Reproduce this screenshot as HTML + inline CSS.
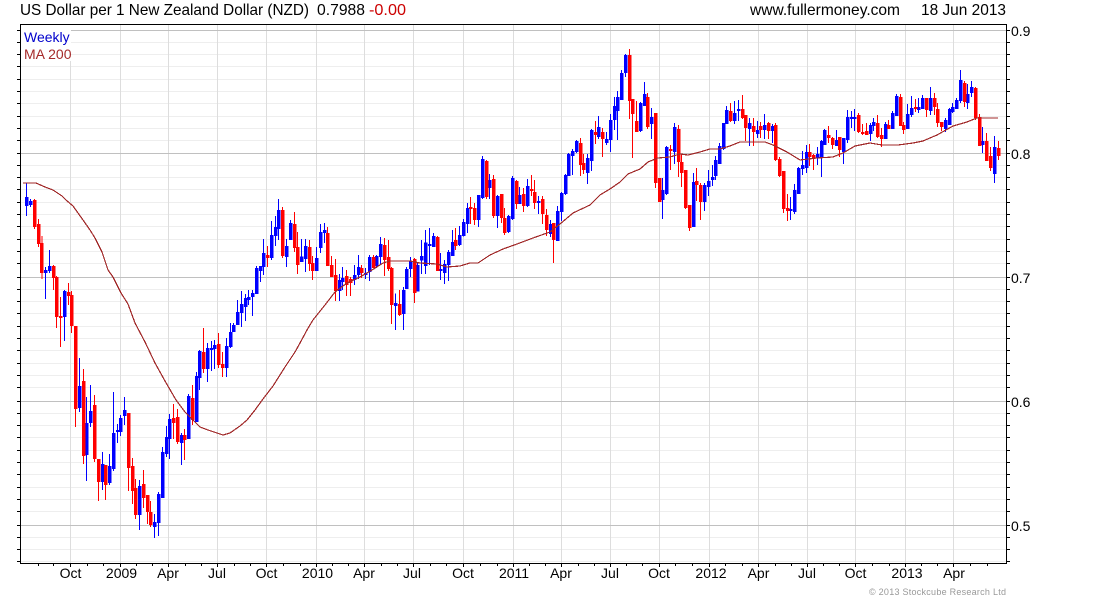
<!DOCTYPE html>
<html>
<head>
<meta charset="utf-8">
<title>US Dollar per 1 New Zealand Dollar</title>
<style>
html,body{margin:0;padding:0;background:#fff;width:1100px;height:600px;overflow:hidden}
svg{display:block;position:absolute;left:0;top:0}
text{font-family:"Liberation Sans",Arial,sans-serif}
.bl{stroke:#0000ff}
.rd{stroke:#ff0000}
</style>
</head>
<body>
<svg width="1100" height="600" viewBox="0 0 1100 600" xmlns="http://www.w3.org/2000/svg">
<g shape-rendering="crispEdges" fill="none" stroke-width="1">
<path stroke="#eeeeee" d="M21 42.5H1006M21 54.5H1006M21 66.5H1006M21 79.5H1006M21 91.5H1006M21 103.5H1006M21 116.5H1006M21 128.5H1006M21 140.5H1006M21 165.5H1006M21 177.5H1006M21 189.5H1006M21 202.5H1006M21 214.5H1006M21 226.5H1006M21 239.5H1006M21 251.5H1006M21 263.5H1006M21 289.5H1006M21 301.5H1006M21 313.5H1006M21 326.5H1006M21 338.5H1006M21 350.5H1006M21 363.5H1006M21 375.5H1006M21 387.5H1006M21 413.5H1006M21 425.5H1006M21 437.5H1006M21 450.5H1006M21 462.5H1006M21 474.5H1006M21 487.5H1006M21 499.5H1006M21 511.5H1006M21 537.5H1006M21 549.5H1006M21 561.5H1006"/>
<path stroke="#dddddd" d="M70.5 25V563M120.5 25V563M168.5 25V563M217.5 25V563M266.5 25V563M316.5 25V563M364.5 25V563M413.5 25V563M463.5 25V563M513.5 25V563M561.5 25V563M610.5 25V563M659.5 25V563M709.5 25V563M758.5 25V563M807.5 25V563M855.5 25V563M905.5 25V563M953.5 25V563"/>
<path stroke="#c0c0c0" d="M21 30.5H1006M21 153.5H1006M21 277.5H1006M21 401.5H1006M21 525.5H1006"/>
</g>
<rect x="21" y="25" width="50" height="36" fill="#fff"/>
<g shape-rendering="crispEdges" fill="none">
<g transform="translate(.17 0) scale(.33333 1)">
<path class="bl" stroke-width="3" d="M79 183V216M91 199V207M136 267V299M148 250V273M193 290V341M238 358V412M259 397V481M271 385V427M307 452V490M328 454V485M340 392V471M352 424V443M361 415V436M373 397V425M418 480V530M463 514V538M475 492V536M487 447V498M499 426V457M508 414V459M544 433V465M565 394V439M589 372V422M598 350V390M622 343V382M634 341V371M643 340V369M679 338V377M691 323V348M700 323V332M712 300V325M724 291V327M736 294V321M745 290V305M757 290V316M769 266V294M781 266V282M790 239V275M814 221V260M826 216V246M835 199V240M859 239V267M871 220V240"/>
<path class="bl" stroke-width="10.5" d="M79 197V206M91 201V205M136 270V273M148 266V271M193 291V317M238 386V408M259 423V455M271 411V423M307 464V482M328 466V483M340 433V469M352 430V432M361 418V432M373 410V416M418 486V515M463 522V527M475 494V523M487 452V498M499 437V454M508 419V439M544 435V443M565 396V439M589 376V422M598 351V378M622 348V369M634 348V350M643 345V349M679 346V368M691 332V347M700 325V332M712 312V325M724 304V313M736 298V307M745 297V300M757 293V297M769 268V294M781 266V271M790 253V267M814 235V258M826 227V236M835 210V229M859 246V257M871 223V240"/>
<path class="rd" stroke-width="3" d="M103 199V229M115 219V247M125 236V279M160 265V290M169 276V328M181 297V347M205 283V305M214 291V333M226 326V427M250 369V464M283 395V462M295 459V501M316 465V500M385 413V491M397 458V504M406 479V519M430 470V508M442 495V524M451 501V527M520 404V439M532 409V444M553 429V460M577 385V425M610 328V373M655 333V368M667 352V377M802 246V267M847 207V258M883 212V252M892 232V274"/>
<path class="rd" stroke-width="10.5" d="M103 200V227M115 224V244M125 243V273M160 266V278M169 277V317M181 316V318M205 292V296M214 295V326M226 326V409M250 381V456M283 405V459M295 459V482M316 465V485M385 413V468M397 466V491M406 488V515M430 484V498M442 495V512M451 512V525M520 418V423M532 417V442M553 435V440M577 398V420M610 352V369M655 344V365M667 364V368M802 255V258M847 210V256M883 224V248M892 247V265"/>
</g>
<g transform="translate(300.17 130) scale(.33333)">
<path class="bl" stroke-width="3" d="M4 327V396M16 327V426M49 351V423M61 282V369M73 279V339M118 432V513M127 411V480M163 405V465M175 375V447M196 414V447M208 375V453M229 375V414M241 321V405M286 490V600M310 471V600M319 411V477M331 381V441M352 396V485M364 330V432M376 300V432M388 294V405M400 309V351M421 369V450M433 390V462M445 360V453M457 300V378M478 288V348M490 267V320M502 219V309M535 195V291M547 78V207M568 132V207M592 195V294M625 255V309M637 138V270M658 171V222M682 147V231M715 198V252M751 270V321M772 228V333M784 186V273M796 132V195M805 69V138M817 57V135M829 30V69"/>
<path class="bl" stroke-width="10.5" d="M4 380V396M16 348V387M49 384V423M61 306V354M73 300V309M118 450V483M127 444V456M163 435V450M175 411V435M196 429V435M208 381V426M229 378V408M241 342V381M286 519V528M310 480V552M319 417V477M331 393V417M352 405V485M364 378V392M376 338V408M388 342V348M400 318V351M421 417V423M433 402V429M445 366V405M457 336V378M478 315V345M490 276V318M502 234V282M535 195V270M547 87V204M568 150V174M592 198V258M625 258V306M637 144V267M658 195V222M682 168V228M715 213V219M751 282V312M772 243V333M784 189V246M796 135V192M805 72V138M817 63V78M829 33V66"/>
<path class="rd" stroke-width="3" d="M28 330V423M37 378V450M82 291V408M94 378V441M106 387V513M139 420V498M151 441V498M184 405V444M220 375V414M253 324V438M265 330V423M274 411V582M298 480V558M343 384V519M412 318V423M466 294V360M511 201V282M523 219V285M559 90V207M580 135V264M604 192V279M613 234V315M649 150V237M670 174V246M694 135V198M703 150V237M727 198V282M739 237V318M760 279V399"/>
<path class="rd" stroke-width="10.5" d="M28 351V402M37 399V423M82 309V408M94 405V441M106 435V483M139 438V465M151 447V459M184 414V429M220 381V414M253 345V390M265 381V417M274 414V525M298 522V555M343 387V489M412 321V423M466 330V348M511 231V237M523 234V270M559 93V201M580 147V258M604 192V264M613 264V309M649 153V222M670 192V228M694 177V183M703 186V219M727 207V252M739 255V300M760 279V330"/>
</g>
<g transform="translate(560.17 0) scale(.33333 1)">
<path class="bl" stroke-width="3" d="M82 154V184M94 129V171M115 116V139M139 132V145M151 114V152M163 97V130M172 91V140M184 70V100M196 54V77M241 102V132M253 82V106M274 108V139M307 178V219M319 146V195M343 123V164M400 173V227M433 183V211M445 170V196M457 165V186M466 156V180M478 143V164M490 123V150M499 106V124M523 101V124M535 100V121M568 118V146M592 121V138M613 114V139M637 124V143M691 197V220M703 184V214M715 167V194M727 151V175M739 145V173M772 147V165M784 140V177M793 129V145"/>
<path class="bl" stroke-width="10.5" d="M82 158V173M94 130V161M115 127V137M139 139V143M151 120V140M163 106V120M172 97V111M184 73V100M196 55V73M241 103V131M253 94V106M274 117V124M307 190V200M319 147V194M343 127V152M400 182V227M433 185V202M445 181V187M457 177V180M466 160V176M478 146V164M490 123V149M499 110V124M523 113V121M535 109V111M568 123V129M592 130V134M613 125V130M637 126V131M691 209V211M703 190V212M715 168V194M727 165V169M739 152V168M772 154V158M784 141V157M793 130V145"/>
<path class="rd" stroke-width="3" d="M61 138V176M70 154V174M106 121V144M127 128V157M208 49V119M217 99V158M229 101V132M262 93V129M286 113V188M298 178V202M331 145V170M355 125V177M364 155V187M376 170V209M388 205V231M409 168V201M421 183V220M511 103V122M547 95V119M556 115V141M580 118V146M601 122V138M625 122V139M646 123V161M658 157V177M670 171V213M682 194V221M748 144V166M760 154V170"/>
<path class="rd" stroke-width="10.5" d="M61 143V165M70 163V170M106 132V135M127 132V139M208 55V101M217 99V114M229 121V132M262 97V127M286 113V183M298 178V202M331 149V151M355 129V162M364 162V173M376 170V208M388 205V228M409 181V185M421 185V202M511 111V121M547 109V118M556 115V128M580 126V132M601 126V130M625 123V131M646 125V160M658 159V176M670 171V209M682 208V211M748 152V157M760 155V159"/>
</g>
<g transform="translate(820.17 0) scale(.33333 1)">
<path class="bl" stroke-width="3" d="M49 130V146M70 138V164M82 110V143M94 111V128M103 109V131M151 123V141M160 118V131M196 122V139M217 111V129M229 94V116M262 104V129M274 96V117M295 98V113M307 95V109M331 87V115M376 118V132M388 108V125M397 103V113M409 98V109M421 70V103M442 84V109M454 81V97M487 127V153M523 136V183"/>
<path class="bl" stroke-width="10.5" d="M49 140V146M70 138V152M82 117V140M94 117V119M103 117V119M151 125V134M160 122V126M196 124V139M217 113V129M229 96V116M262 114V129M274 108V115M295 107V110M307 98V109M331 98V111M376 120V129M388 109V125M397 107V112M409 100V109M421 80V101M442 94V103M454 87V93M487 141V145M523 147V174"/>
<path class="rd" stroke-width="3" d="M25 126V143M37 137V149M58 137V157M115 113V133M127 124V135M139 123V135M172 115V138M184 128V147M205 120V129M241 94V126M250 122V134M286 99V112M319 98V117M343 93V115M352 103V127M364 122V131M433 81V107M466 87V120M478 114V146M499 133V161M511 147V171M535 141V160"/>
<path class="rd" stroke-width="10.5" d="M25 135V138M37 138V145M58 137V150M115 115V132M127 132V134M139 131V135M172 123V137M184 135V139M205 125V129M241 97V126M250 125V130M286 107V109M319 98V110M343 98V107M352 109V123M364 122V127M433 83V102M466 88V118M478 117V146M499 141V161M511 156V168M535 148V156"/>
</g>
</g>
<polyline fill="none" stroke="#a02828" stroke-width="1.2" shape-rendering="crispEdges" points="23,183 36,183 45,187 53,190 62,196 66,200 73,206 83,220 90,230 95,238 102,252 108,270 113,277 121,293 128,304 135,323 145,342 155,363 165,381 176,400 185,412 194,421 200,427 208,430 217,433 223,435 230,433 240,426 247,420 255,410 263,399 273,386 285,367 295,352 300,343 307,330 313,320 325,305 335,292 347,283 360,277 372,270 383,263 390,261 410,261 420,263 437,264 447,267 460,266 470,263 478,263 490,255 503,249 517,244 533,238 550,232 560,224 573,213 590,205 600,195 610,189 620,182 628,174 640,169 648,162 658,158 670,157 680,154 688,155 700,152 710,149 720,149 730,146 740,142 765,142 773,145 787,152 800,160 817,158 833,157 843,153 855,146 870,143 882,145 898,145 913,143 923,141 937,135 953,126 967,122 977,118 998,118"/>
<g shape-rendering="crispEdges" fill="none" stroke="#000" stroke-width="1">
<path d="M20.5 24.5H1006.5V563.5H20.5Z"/>
<path d="M17 30.5H20M17 42.5H20M17 54.5H20M17 66.5H20M17 79.5H20M17 91.5H20M17 103.5H20M17 116.5H20M17 128.5H20M17 140.5H20M17 153.5H20M17 165.5H20M17 177.5H20M17 189.5H20M17 202.5H20M17 214.5H20M17 226.5H20M17 239.5H20M17 251.5H20M17 263.5H20M17 277.5H20M17 289.5H20M17 301.5H20M17 313.5H20M17 326.5H20M17 338.5H20M17 350.5H20M17 363.5H20M17 375.5H20M17 387.5H20M17 401.5H20M17 413.5H20M17 425.5H20M17 437.5H20M17 450.5H20M17 462.5H20M17 474.5H20M17 487.5H20M17 499.5H20M17 511.5H20M17 525.5H20M17 537.5H20M17 549.5H20M17 561.5H20"/>
<path d="M1007 30.5H1010M1007 42.5H1010M1007 54.5H1010M1007 66.5H1010M1007 79.5H1010M1007 91.5H1010M1007 103.5H1010M1007 116.5H1010M1007 128.5H1010M1007 140.5H1010M1007 153.5H1010M1007 165.5H1010M1007 177.5H1010M1007 189.5H1010M1007 202.5H1010M1007 214.5H1010M1007 226.5H1010M1007 239.5H1010M1007 251.5H1010M1007 263.5H1010M1007 277.5H1010M1007 289.5H1010M1007 301.5H1010M1007 313.5H1010M1007 326.5H1010M1007 338.5H1010M1007 350.5H1010M1007 363.5H1010M1007 375.5H1010M1007 387.5H1010M1007 401.5H1010M1007 413.5H1010M1007 425.5H1010M1007 437.5H1010M1007 450.5H1010M1007 462.5H1010M1007 474.5H1010M1007 487.5H1010M1007 499.5H1010M1007 511.5H1010M1007 525.5H1010M1007 537.5H1010M1007 549.5H1010M1007 561.5H1010"/>
<path d="M70.5 564V567M120.5 564V567M168.5 564V567M217.5 564V567M266.5 564V567M316.5 564V567M364.5 564V567M413.5 564V567M463.5 564V567M513.5 564V567M561.5 564V567M610.5 564V567M659.5 564V567M709.5 564V567M758.5 564V567M807.5 564V567M855.5 564V567M905.5 564V567M953.5 564V567"/>
<path d="M38.5 564V566M53.5 564V566M87.5 564V566M103.5 564V566M136.5 564V566M152.5 564V566M185.5 564V566M201.5 564V566M234.5 564V566M250.5 564V566M283.5 564V566M300.5 564V566M332.5 564V566M348.5 564V566M381.5 564V566M397.5 564V566M430.5 564V566M446.5 564V566M480.5 564V566M497.5 564V566M529.5 564V566M545.5 564V566M578.5 564V566M594.5 564V566M626.5 564V566M642.5 564V566M675.5 564V566M692.5 564V566M725.5 564V566M742.5 564V566M775.5 564V566M791.5 564V566M823.5 564V566M839.5 564V566M872.5 564V566M889.5 564V566M921.5 564V566M937.5 564V566M970.5 564V566M987.5 564V566"/>
</g>
<text x="20" y="15" font-size="16" textLength="289" lengthAdjust="spacingAndGlyphs" fill="#000">US Dollar per 1 New Zealand Dollar (NZD)</text>
<text x="317" y="15" font-size="16" textLength="48" lengthAdjust="spacingAndGlyphs" fill="#000">0.7988</text>
<text x="369" y="15" font-size="16" textLength="37" lengthAdjust="spacingAndGlyphs" fill="#cc0000">-0.00</text>
<text x="750" y="15" font-size="16" textLength="150" lengthAdjust="spacingAndGlyphs" fill="#000">www.fullermoney.com</text>
<text x="921" y="15" font-size="16" textLength="85" lengthAdjust="spacingAndGlyphs" fill="#000">18 Jun 2013</text>
<text x="24" y="42" font-size="14" fill="#0000cc">Weekly</text>
<text x="24" y="59" font-size="14" fill="#a52a2a">MA 200</text>
<g font-size="14" fill="#000">
<text x="1011" y="36">0.9</text>
<text x="1011" y="159">0.8</text>
<text x="1011" y="283">0.7</text>
<text x="1011" y="407">0.6</text>
<text x="1011" y="531">0.5</text>
</g>
<g font-size="14" fill="#000" text-anchor="middle">
<text x="70.5" y="578">Oct</text>
<text x="121.5" y="578">2009</text>
<text x="168" y="578">Apr</text>
<text x="217" y="578">Jul</text>
<text x="266.5" y="578">Oct</text>
<text x="317.5" y="578">2010</text>
<text x="364" y="578">Apr</text>
<text x="412" y="578">Jul</text>
<text x="463" y="578">Oct</text>
<text x="514" y="578">2011</text>
<text x="561" y="578">Apr</text>
<text x="610" y="578">Jul</text>
<text x="659" y="578">Oct</text>
<text x="711" y="578">2012</text>
<text x="758.5" y="578">Apr</text>
<text x="807" y="578">Jul</text>
<text x="855.5" y="578">Oct</text>
<text x="907" y="578">2013</text>
<text x="954" y="578">Apr</text>
</g>
<text x="869" y="595" font-size="9" textLength="137" lengthAdjust="spacing" fill="#999">© 2013 Stockcube Research Ltd</text>
</svg>
</body>
</html>
